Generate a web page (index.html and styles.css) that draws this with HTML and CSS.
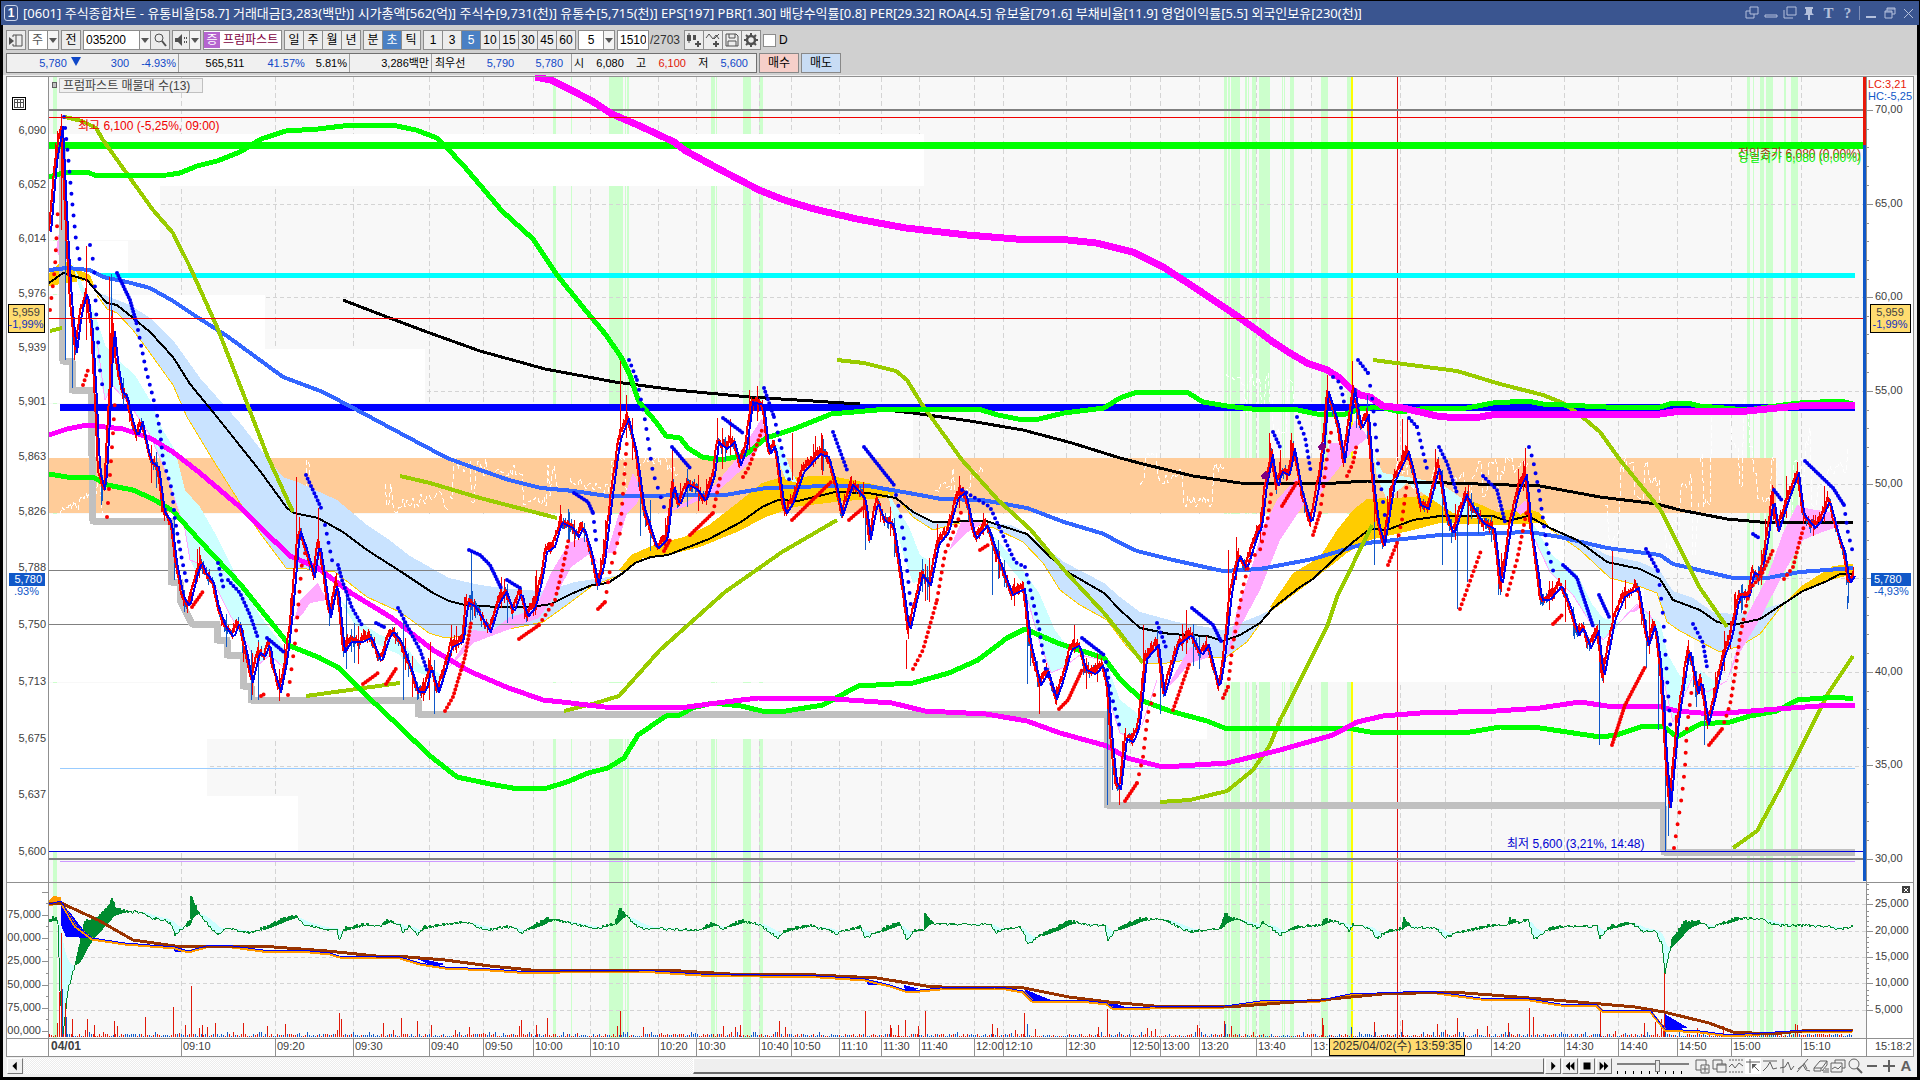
FILE: index.html
```html
<!DOCTYPE html>
<html lang="ko">
<head>
<meta charset="utf-8">
<title>[0601] 주식종합차트</title>
<link rel="stylesheet" href="styles.css">
</head>
<body>
<header class="titlebar">
  <span class="win-no">1</span>
  <h1 class="title">[0601] 주식종합차트 - 유통비율[58.7] 거래대금[3,283(백만)] 시가총액[562(억)] 주식수[9,731(천)] 유통수[5,715(천)] EPS[197] PBR[1.30] 배당수익률[0.8] PER[29.32] ROA[4.5] 유보율[791.6] 부채비율[11.9] 영업이익률[5.5] 외국인보유[230(천)]</h1>
  <div class="win-tools">
    <button aria-label="창 분리"><svg viewBox="0 0 14 14"><path d="M5 1h8v7H5zM5 5H1v7h8V8"/></svg></button>
    <button aria-label="내리기"><svg viewBox="0 0 14 14"><path d="M1 9h12v2H1z"/></svg></button>
    <button aria-label="복사"><svg viewBox="0 0 14 14"><path d="M4 1h9v8H4zM1 4v8h9"/></svg></button>
    <button aria-label="고정"><svg viewBox="0 0 14 14"><path class="solid" d="M3 1h8v2h-1v4l2 2H2l2-2V3H3zM6 9h2v5H6z"/></svg></button>
    <button class="glyph" aria-label="글꼴">T</button>
    <button class="glyph" aria-label="도움말">?</button>
    <i class="bar"></i>
    <button aria-label="최소화"><svg viewBox="0 0 14 14"><path class="solid" d="M2 10h10v2H2z"/></svg></button>
    <button aria-label="이전 크기"><svg viewBox="0 0 14 14"><path d="M4 5V2h8v6h-3M2 5h7v7H2zM2 6h7M4 3h8"/></svg></button>
    <button aria-label="닫기"><svg viewBox="0 0 14 14"><path d="M2 3l9 9M11 3l-9 9"/></svg></button>
  </div>
</header>

<main class="window">
  <form class="toolbar">
    <button type="button" class="tb" aria-label="패널"><svg viewBox="0 0 16 16"><path d="M5 3h9v11H5M8 3v11M5 3v2M5 12v2"/><path class="solid" d="M1 5l5 4-5 4z"/></svg></button>
    <div class="pair"><select class="w-kind" aria-label="종류"><option>주</option></select><i class="drop"></i></div>
    <button type="button" class="tb">전</button>
    <div class="pair">
      <input class="w-code" aria-label="종목코드" value="035200"><button type="button" class="drop" aria-label="목록"></button><button type="button" class="tb" aria-label="검색"><svg viewBox="0 0 16 16"><circle cx="7" cy="6" r="4"/><path d="M10 9l4 5" stroke-width="2"/></svg></button>
    </div>
    <div class="pair"><button type="button" class="tb w-spk" aria-label="음성"><svg viewBox="0 0 16 16"><path class="solid" d="M2 6h3l4-4v12L5 10H2zM11 5h1v2h-1zM13 5h1v2h-1zM11 9h1v2h-1zM13 9h1v2h-1z"/></svg></button><button type="button" class="drop" aria-label="음성 목록"></button></div>
    <div class="stock"><b>증</b><span>프럼파스트</span></div>
    <div class="pair"><button type="button" class="tb">일</button><button type="button" class="tb">주</button><button type="button" class="tb">월</button><button type="button" class="tb">년</button></div>
    <div class="pair"><button type="button" class="tb">분</button><button type="button" class="tb on">초</button><button type="button" class="tb">틱</button></div>
    <div class="pair"><button type="button" class="tb">1</button><button type="button" class="tb">3</button><button type="button" class="tb on">5</button><button type="button" class="tb">10</button><button type="button" class="tb">15</button><button type="button" class="tb">30</button><button type="button" class="tb">45</button><button type="button" class="tb">60</button></div>
    <div class="pair"><input class="w-unit" aria-label="단위" value="5"><button type="button" class="drop" aria-label="단위 목록"></button></div>
    <div class="pair"><input class="w-count" aria-label="봉 수" value="1510"><span class="total">/2703</span></div>
    <div class="pair">
      <button type="button" class="tb" aria-label="차트 추가"><svg viewBox="0 0 16 16"><path class="solid" d="M1 3h4v6H1zM2.5 1h1v10h-1zM7 3h3v5H7zM11 9h2v2h2v2h-2v2h-2v-2H9v-2h2z"/></svg></button><button type="button" class="tb" aria-label="지표 추가"><svg viewBox="0 0 16 16"><path d="M1 6l3-4 4 5 3-4 3 4M9 7l5-5"/><path class="solid" d="M10 9h2v2h2v2h-2v2h-2v-2H8v-2h2z"/></svg></button><button type="button" class="tb" aria-label="저장"><svg viewBox="0 0 16 16"><path d="M2 2h10l2 2v10H2zM5 2v4h6V2M4 14V9h8v5"/></svg></button><button type="button" class="tb" aria-label="설정"><svg viewBox="0 0 16 16"><circle cx="8" cy="8" r="4" stroke-width="2.5"/><path d="M8 1v3M8 12v3M1 8h3M12 8h3M3 3l2 2M11 11l2 2M13 3l-2 2M5 11l-2 2" stroke-width="2"/></svg></button>
    </div>
    <label class="check"><input type="checkbox"> D</label>
  </form>

  <section class="quote">
    <div class="cells">
      <div class="cell c1 down"><span>5,780<svg class="fall" viewBox="0 0 10 10"><path class="solid" d="M0 0h10L5 9z"/></svg></span><span>300</span><span>-4.93%</span></div>
      <div class="cell c2"><span>565,511</span><span class="down">41.57%</span><span>5.81%</span></div>
      <div class="cell c3"><span>3,286백만</span></div>
      <div class="cell c4"><span>최우선</span><span class="down">5,790</span><span class="down">5,780</span></div>
      <div class="cell c5"><span>시</span><span>6,080</span><span>고</span><span class="up">6,100</span><span>저</span><span class="down">5,600</span></div>
    </div>
    <button class="buy">매수</button>
    <button class="sell">매도</button>
  </section>

  <svg id="chart" class="chart" viewBox="3 75 1914 982" role="img" aria-label="프럼파스트 5초 차트"></svg>

  <footer class="scroll">
    <button class="sb" aria-label="왼쪽"><svg viewBox="0 0 16 16"><path class="solid" d="M10 3v10L5 8z"/></svg></button>
    <div class="track"><div class="thumb"></div></div>
    <button class="sb" aria-label="재생"><svg viewBox="0 0 16 16"><path class="solid" d="M6 3v10l5-5z"/></svg></button>
    <button class="sb" aria-label="뒤로"><svg viewBox="0 0 16 16"><path class="solid" d="M8 3v10L3 8zM13 3v10L8 8z"/></svg></button>
    <button class="sb" aria-label="정지"><svg viewBox="0 0 16 16"><path class="solid" d="M4 4h8v8H4z"/></svg></button>
    <button class="sb" aria-label="앞으로"><svg viewBox="0 0 16 16"><path class="solid" d="M3 3v10l5-5zM8 3v10l5-5z"/></svg></button>
    <input type="range" class="speed" aria-label="속도" min="0" max="100" value="57">
    <div class="draw-tools">
      <button aria-label="확대 창"><svg viewBox="0 0 16 16"><path d="M2 2h10v5M2 2v10h5M7 7h8v8H7zM11 8v6M8 11h6"/></svg></button>
      <button aria-label="겹치기"><svg viewBox="0 0 16 16"><path d="M2 2h9v4M2 2v9h4M6 6h9v8H6zM6 7h9"/></svg></button>
      <button aria-label="범위"><svg viewBox="0 0 16 16"><path d="M1 2h14M1 14h14" stroke-dasharray="2 1"/><path d="M1 9l3-3 3 4 4-5 4 3"/></svg></button>
      <button class="on" aria-label="십자선"><svg viewBox="0 0 16 16"><path d="M5 1v14M1 4h14M8 7l6 6"/><path class="solid" d="M7 6h5l-5 5z"/></svg></button>
      <button aria-label="수평선"><svg viewBox="0 0 16 16"><path d="M1 3h14M1 13l4-4 3-5 3 7 4-1"/></svg></button>
      <button aria-label="수직선"><svg viewBox="0 0 16 16"><path d="M4 1v14M1 10l5-1 3-5 3 8 3-4" /></svg></button>
      <button aria-label="추세선"><svg viewBox="0 0 16 16"><path d="M1 14L12 1M2 11l5-4 3 5 4 1M8 5l3 6"/></svg></button>
      <button aria-label="전체 지우기"><svg viewBox="0 0 16 16"><path d="M1 10l6-7h7l-5 7zM1 10v3h7v-3M9 13l5-6V3M11 15v-3M13 10v5M15 10v5"/></svg></button>
      <button aria-label="차트 묶음"><svg viewBox="0 0 16 16"><path d="M5 5V2h10v8h-3M1 5h11v9H1zM2 11l3-2 3 2 3-3"/></svg></button>
      <button aria-label="돋보기"><svg viewBox="0 0 16 16"><circle cx="7" cy="6" r="5"/><path d="M10 10l5 5" stroke-width="2"/></svg></button>
      <button aria-label="축소"><svg viewBox="0 0 16 16"><path class="solid" d="M3 7h10v2H3z"/></svg></button>
      <button aria-label="확대"><svg viewBox="0 0 16 16"><path class="solid" d="M2 7h12v2H2zM7 2h2v12H7z"/></svg></button>
      <button class="glyph" aria-label="자동">A</button>
    </div>
  </footer>
</main>
<script src="chart.js"></script>
</body>
</html>
```
FILE: styles.css
```css
* { box-sizing: border-box; }
body {
  margin: 0;
  padding: 1px 0 3px;
  min-height: 100vh;
  display: flex;
  flex-direction: column;
  background: #000;
  color: #000;
  font: 12px/14px "Liberation Sans", "Noto Sans CJK KR", sans-serif;
}
button, input, select { font: inherit; color: inherit; margin: 0; padding: 0; border-radius: 0; }
svg { display: block; }
button svg { width: 16px; height: 16px; fill: none; stroke: currentColor; }
.solid { fill: currentColor; stroke: none; }

.titlebar {
  height: 24px;
  margin: 0 1px;
  padding: 0 2px 0 3px;
  display: flex;
  align-items: center;
  gap: 5px;
  background: #3a5590;
  color: #fff;
}
.win-no {
  width: 14px;
  height: 16px;
  border: 1px solid #cdd6ea;
  border-radius: 3px;
  font-weight: bold;
  text-align: center;
}
.title {
  flex: 1;
  margin: 0;
  font: 13px/20px "Noto Sans", "Noto Sans CJK KR", sans-serif;
  white-space: nowrap;
  overflow: hidden;
}
.win-tools { display: flex; align-items: center; gap: 4px; color: #b4c0dc; }
.win-tools button { width: 15px; height: 18px; border: 0; background: none; }
.win-tools svg { width: 14px; height: 14px; }
.win-tools .glyph { font: bold 15px/18px "Liberation Serif", serif; }
.bar { width: 1px; height: 14px; background: #8090b8; }

.window {
  flex: 1;
  display: flex;
  flex-direction: column;
  margin: 0 3px;
  background: #f0f0f0;
}
.toolbar {
  height: 27px;
  padding: 5px 3px 2px;
  display: flex;
  align-items: center;
  gap: 2px;
  background: #d0d0d0;
}
.pair { display: flex; align-items: center; }
.tb, .drop, .toolbar input, .toolbar select {
  height: 20px;
  border: 1px solid #8c8c8c;
}
.tb { width: 20px; background: #ececec; display: grid; place-items: center; }
.pair > * + * { margin-left: -1px; }
.tb svg { color: #505050; }
.tb.on { background: #4a80c4; color: #fff; }
.w-spk { width: 18px; }
.drop { width: 12px; background: #f4f4f4; display: grid; place-items: center; }
.drop::after { content: ""; border: 4px solid transparent; border-top: 5px solid #555; border-bottom: 0; }
.toolbar input:not([type]) { background: #fff; padding: 0 2px; }
.toolbar select { width: 20px; padding-left: 3px; background: #fff; appearance: none; color: #555; }
.w-code { width: 57px; }
.toolbar .w-unit { width: 26px; text-align: center; }
.toolbar .w-count { width: 32px; }
.total { width: 34px; padding-left: 2px; color: #333; }
.stock { width: 79px; height: 20px; display: flex; align-items: center; border: 1px solid #8c8c8c; background: #fff; color: #800040; white-space: nowrap; overflow: hidden; }
.stock b { width: 16px; height: 16px; line-height: 16px; background: #b565cf; color: #fff; font-weight: normal; text-align: center; }
.stock span { padding-left: 3px; }
.check { display: flex; align-items: center; gap: 3px; }
.toolbar .check input { width: 13px; height: 13px; appearance: none; background: #fff; }

.quote {
  height: 23px;
  padding: 1px 3px 2px;
  display: flex;
  gap: 2px;
  background: #d0d0d0;
}
.cells { display: flex; border: 1px solid #707070; background: #f0f0f0; }
.cell { display: flex; align-items: center; justify-content: flex-end; padding-right: 2px; border-right: 1px solid #a0a0a0; font-size: 11px; }
.cell:last-child { border: 0; }
.fall { display: inline-block; width: 10px; height: 10px; margin-left: 4px; }
.c1 { width: 172px; gap: 12px; }
.c1 span:nth-child(2) { padding-left: 18px; }
.c2 { width: 171px; gap: 11px; }
.c2 span:nth-child(2) { padding-left: 12px; }
.c3 { width: 82px; }
.c4 { width: 140px; padding: 0 8px 0 3px; justify-content: space-between; }
.c5 { width: 184px; padding: 0 8px 0 2px; justify-content: space-between; }
.down { color: #1048c8; }
.up { color: #e01808; }
.buy, .sell { width: 40px; border: 1px solid #888; background: #f6cfc9; }
.sell { background: #c8dcf4; }

.chart { flex: 1; width: 100%; min-height: 0; background: #f0f0f0; shape-rendering: crispEdges; }
.chart text { font-size: 11px; fill: #404040; }
.chart .label { font-size: 12px; }
.chart .bold { font-size: 12px; font-weight: bold; }
.chart .end { text-anchor: end; }
.chart .mid { text-anchor: middle; }
.line { fill: none; stroke-linejoin: round; }
.dots { fill: none; stroke-width: 4; stroke-linecap: round; shape-rendering: auto; }

.scroll { height: 20px; display: flex; align-items: flex-start; gap: 1px; padding: 1px 3px 3px 4px; background: #f0f0f0; }
.sb { width: 16px; height: 16px; border: 1px solid #fff; border-right-color: #777; border-bottom-color: #777; background: #efefef; }
.sb svg { width: 14px; height: 14px; }
.track { flex: 1; height: 16px; background: repeating-conic-gradient(#ececec 0 25%, #fff 0 50%) 0 0 / 2px 2px; }
.thumb { margin-left: 44%; height: 16px; background: #efefef; border: 1px solid #fff; border-bottom: 2px solid #6a6a6a; border-right-color: #6a6a6a; }
.speed { width: 72px; height: 16px; margin: 0 4px; appearance: none; background:
  linear-gradient(#808080, #808080) 0 5px / 100% 2px no-repeat,
  repeating-linear-gradient(90deg, #000 0 1px, transparent 1px 8px) 0 13px / 100% 3px no-repeat; }
.speed::-webkit-slider-thumb { appearance: none; width: 5px; height: 12px; background: #e8e8e8; border: 1px solid #777; }
.draw-tools { display: flex; gap: 1px; color: #606060; }
.draw-tools button { width: 16px; height: 16px; border: 0; background: none; }
.draw-tools .on { background: #fff; }
.draw-tools .glyph { font-weight: bold; font-size: 15px; }
```
FILE: chart.js
```js
const NS = 'http://www.w3.org/2000/svg';
const root = document.getElementById('chart');

function add(tag, attrs, parent = root, text) {
  const el = document.createElementNS(NS, tag);
  for (const k in attrs) el.setAttribute(k, attrs[k]);
  if (text !== undefined) el.textContent = text;
  parent.appendChild(el);
  return el;
}
const rect = (x, y, w, h, fill, more = {}) => add('rect', { x, y, width: w, height: h, fill, ...more });
const line = (pts, stroke, w = 1, more = {}) =>
  add('polyline', { points: pts, class: 'line', stroke, 'stroke-width': w, ...more });
const area = (pts, fill) => add('polygon', { points: pts, fill });
const hline = (x1, x2, y, c, w = 1, dash) => line(`${x1},${y} ${x2},${y}`, c, w, dash ? { 'stroke-dasharray': dash } : {});
const vline = (x, y1, y2, c, w = 1, dash) => line(`${x},${y1} ${x},${y2}`, c, w, dash ? { 'stroke-dasharray': dash } : {});
const label = (x, y, s, cls = '', fill) => {
  const t = add('text', { x, y, class: cls }, root, s);
  if (fill) t.style.fill = fill;
  return t;
};
const parse = s => s.trim().split(/\s+/).map(p => p.split(',').map(Number));
let seed = 7;
const rnd = () => (seed = (seed * 16807) % 2147483647) / 2147483647;
function valueAt(pts, x) {
  for (let i = 1; i < pts.length; i++) {
    const [x0, y0] = pts[i - 1], [x1, y1] = pts[i];
    if (x <= x1) return y0 + (y1 - y0) * (x - x0) / (x1 - x0 || 1);
  }
  return pts[pts.length - 1][1];
}

/* panels */
rect(6, 76, 1908, 981, '#fff');
rect(49, 77, 1818, 961, '#f8f8f8');

/* signal stripes */
const stripes = [[53,4],[553,3],[571,1],[609,2],[611,12],[625,1],[627,2],[711,4],[716,1],[743,8],[759,4],
  [1224,3],[1228,2],[1231,9],[1245,2],[1248,1],[1252,4],[1259,11],[1282,1],[1284,1],[1290,4],[1321,7],[1347,4],
  [1747,3],[1753,1],[1760,4],[1766,7],[1784,2],[1791,7]];
for (const [x, w] of stripes) rect(x, 77, w, 961, '#ccffcc');
rect(1351, 77, 2, 961, '#ffff00');

/* grid; the last two labels share their place with the cursor tag */
const times = [[181,'09:10'],[275,'09:20'],[353,'09:30'],[429,'09:40'],[483,'09:50'],[533,'10:00'],[590,'10:10'],
  [658,'10:20'],[696,'10:30'],[759,'10:40'],[791,'10:50'],[839,'11:10'],[881,'11:30'],[919,'11:40'],[974,'12:00'],
  [1003,'12:10'],[1066,'12:30'],[1130,'12:50'],[1160,'13:00'],[1199,'13:20'],[1256,'13:40'],[1311,'13:'],
  [1491,'14:20'],[1564,'14:30'],[1618,'14:40'],[1677,'14:50'],[1731,'15:00'],[1801,'15:10'],[1400,''],[1445,'']];
for (const [x] of times) vline(x + .5, 77, 1038, '#d4d4d4', 1, '5 3');
for (const y of [204, 297, 391, 484, 578, 672, 766, 904, 931, 957, 983, 1010])
  hline(49, 1866, y + .5, '#d4d4d4', 1, '4 3');

/* volume profile */
for (const [y, h, x] of [[134,52,924],[186,54,160],[241,53,128],[295,54,265],[349,54,425],[404,54,913],
  [514,56,1564],[570,55,1644],[625,57,1694],[683,56,1207],[739,57,207],[796,55,298]])
  rect(49, y, x - 49, h, '#fff');
rect(49, 458, 1727, 55, '#ffcc99');
vline(1397.5, 77, 1038, '#e01010');

for (const [from, to, top, low] of [[60,130,465,522],[285,330,462,545],[385,450,475,512],[450,560,460,505],[570,680,460,505],
  [935,985,460,512],[1140,1225,455,512],[1226,1300,370,440],[1385,1500,455,510],[1500,1530,450,500],[1605,1700,460,560],[1700,1800,400,520],[1800,1850,425,510]]) {
  let tr = '', ty = (top + low) / 2;
  for (let x = from; x < to; x += 2) {
    if (rnd() < .3) ty = top + rnd() * (low - top);
    tr += `${x},${Math.round(ty + (rnd() - .5) * 12)} `;
  }
  line(tr, '#ffffff', 1, { 'stroke-dasharray': '5 3' });
}

/* clouds */
const sky = '#c9e3ff', gold = '#ffcc00', aqua = '#ccffff', pink = '#ffaaff';
area('97,292 130,305 150,318 173,340 200,378 240,423 265,455 283,477 300,483 337,500 367,525 388,539 410,556 449,578 480,585 510,589 540,591 555,588 575,582 608,577 620,575 592,586 571,602 543,622 490,633 445,638 429,633 400,612 367,597 335,572 298,568 286,568 260,533 240,503 213,460 187,417 173,385 150,353 133,330 117,313 107,309', sky);
line('97,295 107,309 117,313 133,330 150,353 173,385 187,417 213,460 240,503 260,533 286,568 298,568 335,572 367,597 400,612 429,633 445,638 490,633 543,622 571,602 592,586 620,575', gold);
area('896,497 913,510 933,522 986,523 1011,525 1027,533 1064,562 1104,583 1120,597 1140,612 1177,622 1223,630 1260,615 1270,610 1247,642 1227,657 1207,657 1167,663 1143,663 1127,647 1107,620 1080,605 1060,590 1043,563 1023,542 994,528 958,523 933,530 913,517', sky);
line('896,497 913,517 933,530 958,523 994,528 1023,542 1043,563 1060,590 1080,605 1107,620 1127,647 1143,663 1167,663 1207,657 1227,657 1247,642 1270,610', gold);
area('1550,529 1580,540 1607,555 1640,562 1660,571 1673,591 1693,598 1713,612 1733,614 1760,610 1783,603 1760,634 1740,646 1720,652 1697,640 1680,631 1667,622 1657,593 1633,584 1610,578 1580,550', sky);
line('1550,529 1580,550 1610,578 1633,584 1657,593 1667,622 1680,631 1697,640 1720,652 1740,646 1760,634 1783,604', gold);
for (const p of ['49,274 63,259 75,268 90,275 97,292 87,280 67,283 49,286',
  '619,570 631,555 656,544 684,537 709,525 741,500 762,483 782,477 831,476 868,483 896,490 892,497 835,502 794,507 766,517 737,532 700,547 668,555 643,558 623,573',
  '1270,607 1293,573 1320,557 1337,530 1353,510 1367,499 1413,497 1440,493 1477,503 1497,512 1523,507 1540,513 1550,528 1540,523 1500,525 1440,523 1413,530 1370,540 1347,553 1313,580 1273,610',
  '1783,604 1800,587 1833,566 1853,564 1853,574 1827,581 1803,591']) area(p, gold);
for (const p of ['72,262 85,290 97,320 105,345 118,360 135,375 150,400 163,430 175,450 185,490 200,507 216,535 241,585 261,617 286,650 284,666 270,655 258,665 245,640 230,615 215,585 205,565 195,570 190,560 185,530 175,500 165,470 150,435 130,405 112,385 105,400 98,370 90,310 80,290',
  '340,600 355,615 365,625 380,635 395,640 405,645 420,665 437,672 445,680 437,682 425,675 410,670 400,655 385,648 370,640 355,625',
  '770,440 782,447 792,473 798,483 786,480', '888,493 909,527 920,555 933,563 927,580 913,583 904,557 892,513',
  '986,527 1023,570 1039,593 1055,630 1068,647 1064,667 1051,673 1039,640 1023,583 998,553',
  '1103,653 1120,700 1137,713 1140,727 1132,738 1120,733 1110,703',
  '1373,453 1383,473 1407,477 1440,483 1460,497 1477,507 1484,520 1453,513 1407,483 1387,500 1377,477',
  '1530,519 1553,556 1577,574 1592,604 1603,618 1620,622 1633,605 1612,634 1600,640 1590,622 1573,595 1550,572 1535,540',
  '1640,606 1653,618 1660,622 1668,655 1680,676 1692,674 1684,695 1673,722 1663,677 1656,630', '1700,670 1713,680 1722,680 1708,700']) area(p, aqua);
for (const p of ['56,250 62,215 70,262 60,258', '294,620 300,600 318,583 327,600 310,603 302,615',
  '449,667 465,643 473,630 490,632 510,617 535,610 551,573 569,543 584,537 598,563 588,555 571,567 559,590 539,618 494,635 473,643',
  '607,553 623,500 633,473 643,490 637,503 627,513 615,553',
  '664,513 684,503 713,487 733,463 762,418 766,437 749,463 717,492 684,507', '949,550 962,520 984,523 966,533',
  '1167,687 1190,647 1207,650 1210,657 1190,663 1173,683',
  '1227,657 1237,610 1250,573 1263,527 1277,500 1297,477 1307,500 1300,510 1280,540 1260,590 1240,627',
  '1317,500 1330,443 1343,443 1355,420 1368,437 1353,450 1343,463 1327,483',
  '1515,510 1525,500 1530,508 1520,515', '1630,612 1638,604 1641,608 1634,612',
  '1727,681 1747,615 1767,578 1783,533 1797,505 1810,509 1830,512 1840,526 1820,533 1803,540 1783,574 1760,619 1737,657']) area(p, pink);
line('97,340 105,400 112,385 130,405 150,435 165,470 175,500 185,530 190,560 205,566 215,585 230,615 245,640 258,665 270,655 284,668 290,640', pink);
line('1023,583 1039,640 1051,673 1064,667 1080,655 1102,660 1110,703 1120,733 1132,738 1142,725 1157,680', pink);
line('1533,536 1550,572 1573,595 1590,622 1603,640 1637,604 1650,615 1657,632 1663,677 1673,722 1693,676 1707,692 1727,681', pink);

/* reference levels */
hline(49, 1863, 110, '#808080', 2);
hline(49, 1600, 570.5, '#808080');
hline(49, 1645, 624.5, '#808080');
hline(60, 1855, 768.5, '#99ccff');
hline(60, 1855, 861.5, '#cc99ff');
hline(49, 1863, 859, '#808080', 2);

/* running low */
line('62,146 63,361 72,361 72,390 91,390 93,521 171,521 171,582 180,582 180,600 192,624 217,624 217,640 227,640 227,655 243,655 243,686 251,686 251,700 418,700 418,714 1107,714 1107,805 1663,805 1664,852 1855,852', '#c0c0c0', 7);
hline(49, 1863, 851.5, '#0000e0');

/* moving averages and bands */
const black1 = '49,283 63,273 87,280 97,292 107,303 117,305 133,318 150,332 173,357 190,384 213,412 233,437 260,471 287,508 294,513 318,518 343,532 367,550 400,571 433,593 449,601 465,605 498,607 531,607 551,604 571,594 592,585 608,583 623,573 635,563 651,557 668,555 709,539 741,522 762,507 778,500 798,501 835,492 868,493 896,498 913,512 933,522 986,521 1027,534 1043,550 1064,570 1104,593 1120,610 1140,628 1170,634 1207,636 1223,641 1240,635 1260,623 1273,608 1300,587 1313,579 1333,560 1353,542 1370,529 1387,530 1413,520 1440,516 1493,516 1507,521 1528,516 1550,528 1577,540 1607,562 1640,569 1660,579 1673,600 1700,610 1717,622 1733,625 1760,619 1783,604 1803,591 1827,581 1840,574 1853,574';
const azure = '49,270 67,268 90,270 103,277 127,282 150,288 173,301 197,317 227,336 253,355 283,377 323,392 357,410 400,433 447,458 480,470 509,480 541,488 574,491 607,496 725,495 766,488 827,486 868,486 909,493 941,499 982,500 1027,508 1064,522 1104,534 1120,543 1137,551 1173,560 1223,571 1260,569 1313,559 1367,543 1440,535 1530,532 1560,537 1607,548 1660,555 1673,564 1733,578 1767,578 1800,572 1853,568';
hline(49, 1863, 145.5, '#00ff00', 7);
hline(100, 1855, 275.5, '#00ffff', 5);
hline(60, 1855, 407.5, '#0000ff', 7);
line(azure, '#3366ff', 4);
line('343,300 387,317 427,332 480,351 545,369 615,382 676,390 749,397 860,404', '#000', 3);
line('895,411 913,413 970,421 1023,430 1072,443 1120,458 1147,465 1193,476 1240,483 1320,484 1367,481 1447,483 1540,486 1600,497 1657,504 1680,510 1727,519 1760,522 1853,522', '#000', 3);
line(black1, '#000', 2);
for (const p of ['65,117 82,121 96,128 103,140 130,178 153,210 173,233 190,267 217,327 243,393 267,455 293,512', '50,331 62,328',
  '400,476 430,483 480,498 557,518', '306,696 400,683', '564,711 596,703 619,696 660,650 725,592 782,552 837,520',
  '837,360 864,363 896,371 907,380 921,403 962,460 998,500 1031,530 1064,570 1104,613 1120,633 1143,663',
  '1160,802 1190,800 1227,791 1253,770 1270,745 1280,720 1327,627 1337,597 1372,525',
  '1373,360 1457,371 1500,384 1543,395 1563,403 1580,415 1600,432 1620,460 1660,509 1700,588 1727,627',
  '1733,848 1757,831 1777,794 1800,750 1827,695 1853,656']) line(p, '#99cc00', 4);
line('49,177 67,172 87,172 97,176 167,175 180,173 197,166 217,161 240,152 261,139 286,131 318,129 351,125 392,125 416,130 437,138 447,148 463,165 480,185 502,211 533,239 557,275 582,306 606,335 621,357 629,373 639,402 656,422 666,436 680,438 688,448 702,457 721,460 745,455 766,438 794,429 831,414 888,409 978,409 998,415 1023,420 1039,419 1064,413 1104,408 1120,398 1137,392 1187,392 1203,402 1227,406 1260,410 1293,409 1317,414 1343,415 1360,409 1380,407 1400,412 1420,409 1467,408 1493,403 1527,401 1543,404 1627,408 1660,407 1673,403 1687,403 1700,406 1747,410 1783,405 1800,403 1840,401 1853,404', '#00ff00', 5);
line('49,474 67,477 93,477 107,485 133,490 153,499 173,511 200,541 241,585 290,646 318,657 339,668 367,696 400,727 429,755 457,777 490,784 518,789 547,788 567,782 588,773 608,768 624,758 638,735 666,716 680,715 692,708 713,703 741,706 762,711 786,711 823,705 858,686 913,683 949,673 978,660 1007,638 1025,629 1060,644 1104,658 1120,679 1143,701 1170,711 1207,721 1227,729 1347,728 1370,732 1470,732 1500,727 1540,728 1567,732 1600,737 1617,735 1643,726 1663,726 1677,737 1700,724 1730,722 1750,716 1777,711 1797,700 1837,697 1853,699', '#00ff00', 5);
line('49,435 67,429 87,425 123,429 150,438 173,452 200,473 240,507 261,528 290,556 318,568 351,593 392,618 433,650 469,671 506,687 543,700 571,703 604,707 680,708 709,704 758,698 835,699 892,703 925,711 986,714 1027,721 1060,733 1107,746 1127,758 1163,767 1227,763 1280,750 1333,735 1357,722 1383,716 1420,713 1497,711 1540,708 1580,702 1607,706 1657,706 1677,711 1713,714 1777,709 1833,705 1855,706', '#ff00ff', 5);
line('535,77 551,80 571,90 592,101 612,114 640,126 674,142 686,151 719,169 759,190 784,200 814,209 857,219 906,228 967,235 1016,239 1059,239 1096,243 1133,252 1163,267 1200,291 1237,316 1261,333 1273,342 1290,353 1307,363 1327,370 1340,378 1350,388 1360,395 1370,397 1383,406 1403,408 1420,412 1437,416 1457,418 1480,417 1497,414 1660,414 1680,411 1747,411 1777,408 1810,405 1855,405', '#ff00ff', 7);

/* price */
const price = parse('49,230 55,160 61,125 66,230 70,300 75,350 80,310 86,290 91,330 95,400 98,470 104,490 110,380 112,320 116,360 121,390 126,395 130,415 136,435 141,420 146,445 150,460 157,465 163,510 170,520 175,560 182,595 188,605 195,575 200,560 205,572 212,580 217,605 224,625 232,635 238,620 245,650 251,680 258,650 264,655 268,640 272,665 279,690 286,655 292,600 297,540 299,530 306,550 313,575 318,540 324,580 329,615 336,580 343,650 350,640 360,640 370,635 380,660 388,635 392,630 400,640 410,668 417,690 424,690 430,665 437,690 445,665 450,645 462,640 466,600 474,605 480,615 489,630 498,600 505,590 512,610 520,590 526,615 534,605 541,575 545,550 553,545 560,520 570,525 577,535 582,525 590,550 597,583 603,560 610,500 618,440 627,417 635,450 643,507 656,547 666,537 672,483 678,503 686,483 696,487 704,500 713,473 717,440 725,447 733,440 739,463 745,447 751,400 762,403 768,453 774,443 784,513 792,500 802,470 819,452 827,455 835,483 841,513 851,483 864,497 869,537 876,500 884,520 892,522 900,573 908,630 921,573 929,583 937,543 947,530 956,497 964,490 974,537 986,523 996,553 1011,593 1023,587 1029,640 1039,683 1047,670 1055,697 1062,677 1070,647 1078,643 1084,667 1094,672 1102,663 1107,687 1110,733 1115,780 1119,787 1125,737 1132,740 1138,723 1145,657 1157,643 1163,693 1177,643 1190,633 1200,653 1207,643 1218,687 1223,657 1230,590 1238,553 1245,567 1257,530 1260,527 1265,483 1271,453 1276,487 1280,470 1288,473 1293,447 1300,487 1310,523 1318,480 1323,440 1327,390 1337,423 1343,460 1353,387 1360,427 1367,413 1372,480 1377,520 1383,543 1393,480 1407,450 1413,473 1419,503 1427,507 1438,463 1445,510 1452,533 1465,493 1473,507 1482,522 1493,527 1500,587 1510,520 1518,487 1525,473 1530,527 1537,573 1540,598 1548,598 1560,584 1568,602 1577,633 1582,626 1589,646 1597,629 1602,677 1613,619 1623,595 1637,586 1647,643 1654,622 1660,667 1665,753 1669,805 1677,719 1688,646 1697,691 1700,677 1707,722 1713,698 1722,657 1730,636 1738,595 1748,595 1752,571 1760,574 1767,533 1772,495 1777,529 1787,498 1797,471 1802,512 1813,526 1820,519 1828,498 1837,533 1843,550 1848,581 1853,574');
let redBars = '', blueBars = '', avg = '', quick = '';
for (let x = 49; x <= 1853; x++) {
  const y = Math.round(valueAt(price, x) + (rnd() - .5) * 7);
  const rising = valueAt(price, x + 1) < valueAt(price, x - 1);
  const len = rnd() < .1 ? 16 + rnd() * 28 : 4 + rnd() * 8;
  const seg = `M${x}.5 ${Math.round(y - len * (rising ? .6 : .4))}v${Math.round(len)}`;
  if (rising || rnd() < .4) redBars += seg; else blueBars += seg;
  quick += `${x},${y} `;
  if (x % 2) avg += `${x + 2},${Math.round(valueAt(price, x)) + 2} `;
}
[[61,114,230],[86,246,340],[109,277,400],[112,310,380],[296,477,560],[318,508,560],[429,660,700],[560,505,530],[620,361,450],[672,447,500],
 [717,418,440],[749,390,450],[792,433,480],[821,433,470],[906,640,669],[1039,680,714],[1119,780,805],[1143,625,700],[1228,550,620],[1269,433,470],
 [1291,433,470],[1327,375,400],[1352,361,400],[1402,419,470],[1407,419,460],[1525,448,480],[1612,551,640],[1773,487,520],[1797,462,480]]
  .forEach(([x, a, b]) => redBars += `M${x}.5 ${a}V${b}`);
[[65,230,360],[72,300,388],[111,274,330],[174,520,580],[251,650,700],[258,640,700],[346,590,669],[403,620,700],[434,660,714],
 [471,550,610],[640,470,536],[650,500,551],[865,500,550],[992,540,595],[1027,600,684],[1107,700,805],[1112,740,790],[1160,660,714],[1374,480,565],
 [1442,470,565],[1457,510,609],[1467,500,582],[1498,560,595],[1599,620,745],[1646,620,668],[1658,660,730],[1665,700,851],[1668,780,836],[1704,690,745],[1847,596,609]]
  .forEach(([x, a, b]) => blueBars += `M${x}.5 ${a}V${b}`);
add('path', { d: blueBars, class: 'line', stroke: '#1058c8' });
add('path', { d: redBars, class: 'line', stroke: '#f00000' });
line(quick, '#f80000', 2);
line(avg, '#0000f0', 2);

/* trend-stop dots: [gap, points] */
const dots = (list, colour) => list.forEach(([gap, p]) =>
  add('polyline', { points: p, class: 'dots', stroke: colour, 'stroke-dasharray': `0 ${gap}` }));
dots([[11,'64,117 68,155 72,200 76,240 80,262'],[14,'90,245 94,265 96,310 100,370 104,397'],[3,'117,273 130,300 137,325'],
  [8,'138,330 146,370 155,405 160,430 163,460 172,490 175,520 182,560 188,588'],[6,'218,563 224,590'],[4,'228,580 240,593 250,615 258,638'],
  [3,'267,638 285,653'],[4,'306,475 322,510'],[9,'325,525 333,565'],[4,'338,565 342,580 352,608 362,625'],[3,'376,623 386,628'],[4,'398,608 412,635 420,650 427,670'],
  [3,'469,550 480,555 490,565 502,590'],[3,'507,580 520,588'],[3,'574,493 588,502 593,513'],[9,'593,513 596,540'],[6,'629,360 637,380'],
  [10,'637,380 645,420 653,473 664,507'],[3,'672,447 690,468'],[3,'723,418 743,433'],[4,'764,388 774,417'],[8,'774,417 782,450 790,483'],
  [4,'833,432 847,470'],[3,'864,447 894,485'],[11,'896,495 900,513 904,540 911,607'],[5,'962,490 990,507 1015,562 1025,567'],
  [8,'1025,567 1039,627 1045,667 1055,693'],[3,'1082,638 1104,655'],[8,'1106,662 1110,690 1120,728'],[5,'1157,623 1167,650'],
  [3,'1192,608 1213,625 1222,643'],[4,'1273,432 1280,447'],[6,'1297,417 1305,437 1311,473'],[7,'1333,377 1340,383 1344,402'],
  [4,'1358,360 1368,373'],[13,'1368,373 1372,397 1375,425 1378,463 1385,517'],[4,'1409,418 1417,427'],[7,'1417,427 1428,473'],[4,'1439,447 1447,463 1457,493'],
  [4,'1483,476 1497,490 1505,522'],[9,'1529,447 1533,460 1539,491 1547,547 1555,578'],[3,'1563,565 1577,578 1593,626'],[3,'1599,595 1610,619'],
  [4,'1646,549 1658,571'],[14,'1658,571 1663,615 1667,677 1671,736'],[5,'1693,624 1703,643 1707,667'],[3,'1753,534 1759,538'],
  [3,'1774,490 1783,502'],[3,'1805,461 1833,488 1844,505'],[9,'1844,505 1848,533 1853,553']], '#0000f0');
dots([[12,'50,310 55,267 58,207'],[5,'83,385 88,370'],[14,'107,517 113,433 115,400'],[3,'192,607 204,590'],[3,'261,696 266,693'],
  [13,'288,695 295,643 302,563 306,550'],[3,'363,684 378,673'],[3,'386,684 397,667'],[4,'445,711 453,697 465,657 471,623'],
  [3,'519,639 539,625'],[6,'539,625 555,600 563,567 569,537'],[3,'598,609 605,602'],[10,'605,602 610,570 620,533 625,467 627,440'],
  [3,'690,535 713,513'],[7,'713,513 721,473'],[3,'664,551 670,540'],[5,'743,477 749,467 762,430'],[3,'792,520 831,482'],[3,'849,520 864,507'],
  [5,'913,669 923,650 937,600'],[7,'937,600 945,553 962,510'],[3,'980,550 988,545'],[3,'1059,709 1068,700 1082,670'],[3,'1125,801 1137,783'],
  [9,'1137,783 1143,757 1148,713 1157,687'],[4,'1173,710 1190,662'],[4,'1223,698 1228,687'],[8,'1228,687 1232,650 1243,587 1250,560 1260,550 1268,517 1272,487'],
  [3,'1282,506 1297,482'],[4,'1313,535 1320,513'],[9,'1320,513 1328,450 1332,427'],[5,'1347,476 1353,463 1357,443'],[4,'1388,565 1397,543'],
  [8,'1397,543 1402,520 1407,483'],[5,'1460,609 1482,548'],[6,'1507,595 1517,560 1527,510'],[3,'1553,624 1562,615'],[3,'1612,745 1625,705 1645,667'],
  [12,'1674,848 1682,795 1685,767 1687,726 1692,688'],[3,'1709,745 1722,729'],[7,'1722,729 1730,705 1735,674 1740,636 1750,588'],
  [4,'1750,588 1760,578 1773,550'],[5,'1784,579 1793,567 1800,540 1804,526']], '#f80000');
for (const [x, y] of [[1265, 475], [1322, 446]]) area(`${x - 4},${y} ${x},${y - 4} ${x + 4},${y} ${x + 3},${y + 4} ${x - 3},${y + 4}`, '#800080');

/* upper red levels and annotations */
hline(49, 1863, 117.5, '#f00000');
hline(49, 1863, 318.5, '#f00000');
rect(59.5, 78.5, 143, 14, '#f0f0f0', { stroke: '#c0c0c0' });
rect(52.5, 82.5, 4, 5, '#c0c0c0', { stroke: '#606060' });
label(63, 90, '프럼파스트 매물대 수(13)', 'label');
label(78, 130, '최고 6,100 (-5,25%, 09:00)', 'label', '#f00000');
label(1507, 848, '최저 5,600 (3,21%, 14:48)', 'label', '#0000d0');
label(1738, 158, '전일종가 6,080 (0,00%)', 'label', '#993300');
label(1738, 162, '당일시가 6,080 (0,00%)', 'label', '#00f000');

/* lower panel */
const osc = parse('49,920 56,916 58,925 60,990 63,1035 68,990 75,965 85,920 95,918 105,910 110,905 112,898 116,908 126,911 145,913 150,918 165,920 172,925 175,935 183,928 190,920 191,896 200,915 210,927 218,935 225,928 250,933 262,928 285,918 295,915 305,925 330,930 337,930 339,940 345,928 365,924 382,926 385,920 400,924 403,933 410,925 417,935 425,926 450,924 467,922 485,930 510,926 522,933 535,925 547,918 565,922 595,929 615,923 620,908 630,920 640,928 700,930 712,922 722,930 740,920 760,925 778,938 785,930 810,925 837,933 860,926 865,938 890,925 900,923 907,940 915,930 924,930 925,914 935,924 990,924 995,932 1020,926 1024,934 1028,945 1040,935 1070,920 1090,925 1105,925 1108,942 1115,930 1140,918 1165,920 1190,932 1220,928 1225,914 1240,920 1258,928 1263,922 1280,935 1295,926 1322,925 1324,918 1345,925 1349,932 1353,924 1370,928 1377,938 1390,930 1402,928 1404,917 1412,928 1435,927 1445,938 1458,932 1490,925 1508,925 1510,918 1520,923 1528,918 1534,940 1550,928 1565,926 1597,926 1600,938 1610,926 1630,922 1645,932 1655,930 1662,945 1665,973 1672,940 1684,922 1700,921 1710,928 1735,918 1760,918 1775,925 1830,926 1835,930 1853,926');
let mean = 922, over = '', under = '', trace = '';
for (let x = 49; x <= 1853; x++) {
  const y = Math.round(valueAt(osc, x) + (rnd() - .5) * 3);
  mean += (y - mean) * (x < 130 ? .06 : .09);
  const m = Math.round(mean);
  if (y < m - 1) over += `M${x}.5 ${y}V${m}`; else if (y > m) under += `M${x}.5 ${m}V${y}`;
  trace += `${x},${y} `;
}
add('path', { d: under, class: 'line', stroke: aqua });
add('path', { d: over, class: 'line', stroke: '#008c30' });
line(trace, '#008c30', 1);

let vr = '', vb = '';
for (let x = 49; x < 1853; x += 2) {
  const h = Math.ceil(rnd() < .15 ? rnd() * 12 : rnd() * 3);
  if (rnd() < .5) vr += `M${x}.5 1037v-${h}`; else vb += `M${x}.5 1037v-${Math.min(h, 5)}`;
}
[[57,14],[59,45],[61,104],[65,34],[72,18],[87,18],[94,12],[114,16],[145,20],[173,30],[185,12],[191,51],[202,12],[215,14],[243,14],[267,11],[285,13],
 [339,24],[341,18],[383,14],[401,19],[417,16],[431,12],[521,17],[536,12],[547,19],[620,26],[723,11],[740,12],[779,16],[785,10],[865,26],[890,12],[898,12],
 [905,17],[918,11],[925,26],[992,13],[1024,24],[1107,28],[1098,10],[1224,16],[1322,19],[1374,15],[1402,17],[1437,13],[1457,19],[1508,14],[1529,29],
 [1533,20],[1600,25],[1644,14],[1655,15],[1661,18],[1664,64],[1795,13]].forEach(([x, h]) => vr += `M${x}.5 1037v-${h}`);
[[62,48],[66,20],[723,6],[1027,13],[1225,13],[1351,10]].forEach(([x, h]) => vb += `M${x}.5 1037v-${h}`);
add('path', { d: vb, class: 'line', stroke: '#1058c8' });
add('path', { d: vr, class: 'line', stroke: '#e01808' });

const fast = '49,904 61,901 75,925 92,938 105,940 125,943 175,947 188,951 210,945 225,945 270,951 300,950 330,953 339,956 400,957 420,963 445,967 490,969 531,972 590,970 640,970 700,974 820,976 865,979 890,985 905,990 920,990 950,987 1000,987 1023,991 1032,1000 1080,1000 1107,1003 1112,1007 1150,1007 1225,1006 1260,1001 1321,1000 1350,994 1430,991 1480,998 1530,999 1560,1004 1597,1005 1602,1010 1650,1010 1665,1029 1700,1031 1730,1035 1790,1031 1853,1030';
area('49,900 53,896 61,897 61,903 49,903', '#ff9900');
for (const p of ['61,902 72,915 85,932 92,938 66,937 61,925', '173,947 183,950 188,951 175,952', '865,979 885,984 868,985', '904,985 920,989 905,991',
  '1024,989 1051,1000 1030,1000', '1108,1001 1125,1007 1112,1009', '1665,1014 1688,1028 1665,1030', '413,957 445,964 435,967']) area(p, '#0000ff');
line(fast, '#ff9900', 3, { transform: 'translate(0 1)' });
line('49,904 61,903 98,920 133,940 175,946 245,947 261,946 327,951 376,956 408,957 445,960 490,966 531,970 592,971 640,970 664,970 730,974 816,975 877,978 926,986 958,988 995,987 1024,988 1069,997 1109,1002 1154,1006 1228,1007 1280,1003 1321,1000 1382,994 1451,992 1492,995 1566,1001 1635,1007 1664,1012 1709,1023 1733,1032 1770,1034 1802,1031 1853,1030', '#993300', 3);
line(fast, '#0000ff', 1);

/* frame and axes */
const edge = '#909090';
rect(6.5, 76.5, 1907, 980, 'none', { stroke: edge });
vline(48.5, 77, 1057, edge);
vline(1866.5, 77, 1057, edge);
hline(6, 1914, 882.5, edge);
hline(6, 1914, 1038.5, edge);
rect(1863, 77, 3, 68, '#e81808');
rect(1863, 145, 3, 736, '#1058c8');

['6,090','6,052','6,014','5,976','5,939','5,901','5,863','5,826','5,788','5,750','5,713','5,675','5,637','5,600']
  .forEach((s, i) => label(46, [134,188,242,297,351,405,460,515,571,628,685,742,798,855][i], s, 'end'));
['70,00','65,00','60,00','55,00','50,00','','40,00','35,00','30,00'].forEach((s, i) => {
  const y = Math.round(110 + i * 93.6);
  hline(1867, 1873, y + .5, edge);
  label(1875, y + 3, s);
  for (let k = 1; k < 5 && i < 8; k++) hline(1867, 1869, Math.round(y + k * 18.7) + .5, edge);
});
['75,000','00,000','25,000','50,000','75,000','00,000'].forEach((s, i) => {
  const y = [915,938,961,985,1008,1031][i];
  label(41, y + 3, s, 'end');
  hline(42, 48, y + .5, edge);
  hline(46, 48, y - 11.5, edge);
});
hline(42, 48, 892.5, edge);
['25,000','20,000','15,000','10,000','5,000'].forEach((s, i) => {
  const y = [904,931,957,983,1010][i];
  label(1875, y + 3, s);
  hline(1867, 1873, y + .5, edge);
  for (let k = 1; k < 5; k++) hline(1867, 1869, y - 5 * k + .5, edge);
});
rect(1902, 886, 8, 7, '#404040');
line('1904,888 1908,892', '#fff'); line('1908,888 1904,892', '#fff');

label(51, 1050, '04/01', 'bold');
for (const [x, s] of times) {
  vline(x + .5, 1039, 1057, edge);
  if (s) label(x + 2, 1050, s);
}
label(1466, 1050, '0');
label(1875, 1050, '15:18:2');

label(1868, 88, 'LC:3,21', '', '#e81808');
label(1868, 100, 'HC:-5,25', '', '#1058c8');

/* price and cursor tags */
const tag = (x, w, y, rows) => {
  rect(x + .5, y + .5, w, 28, '#ffdc70', { stroke: '#000' });
  rows.forEach(([s, c], i) => label(x + w / 2, y + 12 + i * 12, s, 'mid', c));
};
tag(8, 36, 304, [['5,959', '#404040'], ['-1,99%', '#1030c0']]);
tag(1870, 40, 304, [['5,959', '#404040'], ['-1,99%', '#1030c0']]);
rect(9, 573, 36, 13, '#1058c8');
label(42, 583, '5,780', 'end', '#fff');
label(39, 595, '.93%', 'end', '#1058c8');
rect(1871, 573, 40, 13, '#1058c8');
label(1874, 583, '5,780', '', '#fff');
label(1874, 595, '-4,93%', '', '#1058c8');
rect(1329.5, 1038.5, 135, 17, '#ffdc70', { stroke: '#000' });
label(1397, 1050, '2025/04/02(수) 13:59:35', 'mid', '#303030').style.fontSize = '12px';

/* grid button */
rect(12.5, 97.5, 13, 12, '#fff', { stroke: '#000' });
add('path', { d: 'M14.5 99.5h9v8h-9zM14.5 102.5h9M17.5 99.5v8M20.5 99.5v8', class: 'line', stroke: '#505050' });
```
